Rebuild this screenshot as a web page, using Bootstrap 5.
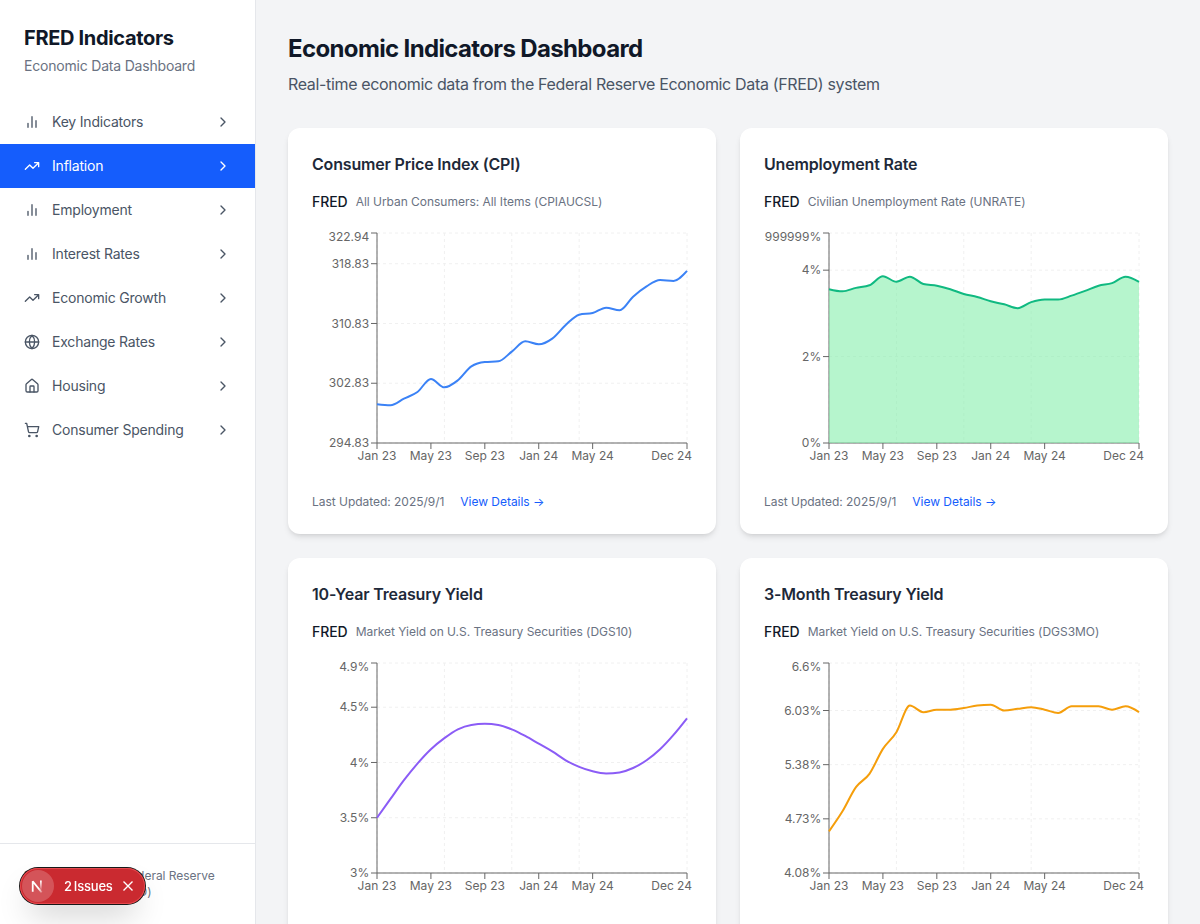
<!DOCTYPE html>
<html lang="en">
<head>
<meta charset="utf-8">
<meta name="viewport" content="width=device-width, initial-scale=1">
<title>FRED Indicators</title>
<link href="https://cdn.jsdelivr.net/npm/bootstrap@5.3.0/dist/css/bootstrap.min.css" rel="stylesheet">
<style>
  body { font-family: Inter, "Liberation Sans", sans-serif; background: #f3f4f6; color: #101828; line-height: 1.5; }
  .sidebar { width: 256px; border-right: 1px solid #e5e7eb; }
  .brand { font-size: 20px; line-height: 28px; letter-spacing: -.33px; }
  .fs-sm { font-size: 14px; line-height: 20px; letter-spacing: -.2px; }
  .fs-xs { font-size: 12px; line-height: 16px; letter-spacing: -.03px; }
  .muted { color: #6a7282; }
  .side-link { gap: 12px; padding: 12px 24px; color: #4a5565; border-radius: 0; font-size: 14px; line-height: 20px; letter-spacing: -.2px; }
  .side-link:hover { color: #101828; }
  .side-link.active { background: #155dfc; color: #fff; }
  .side-foot { border-top: 1px solid #e5e7eb; }
  .icon { width: 16px; height: 16px; fill: none; stroke: currentColor; stroke-width: 2; stroke-linecap: round; stroke-linejoin: round; flex: none; }
  main { padding: 32px; min-width: 0; }
  .page-title { font-size: 24px; line-height: 32px; padding-top: 1px; margin-bottom: 7px; letter-spacing: -.64px; }
  .page-sub { font-size: 16px; line-height: 24px; color: #4a5565; margin-bottom: 32px; letter-spacing: -.34px; }
  .panel { border: 0; border-radius: 12px; padding: 24px; box-shadow: 0 4px 6px -1px rgba(0,0,0,.1), 0 2px 4px -2px rgba(0,0,0,.1); }
  .panel h2 { font-size: 16px; line-height: 24px; color: #1e2939; letter-spacing: -.18px; }
  .panel a { color: #155dfc; }
  .source { font-size: 14px; line-height: 20px; font-weight: 500; letter-spacing: -.06px; }
  .chart { display: block; width: 380px; height: 250px; font-size: 12px; overflow: visible; }
  .issues { left: 20px; bottom: 20px; width: 125px; height: 36px; border-radius: 18px; background: #ca2a30; color: #fff; padding: 2px;
    box-shadow: 0 0 0 1px #171717, inset 0 0 0 1px #e5484d, 0 16px 32px -8px rgba(0,0,0,.24); font-size: 13px; line-height: 16px; }
  .issues-logo { width: 32px; height: 32px; background: rgba(255,255,255,.2); }
  .issues-text { gap: 2px; margin: -1px 9px 0 10px; font-weight: 500; letter-spacing: -.2px; }
</style>
</head>
<body class="overflow-hidden">
<svg class="d-none">
  <symbol id="bars" viewBox="0 0 24 24"><path d="M18 20V10M12 20V4M6 20v-6"/></symbol>
  <symbol id="trend" viewBox="0 0 24 24"><path d="M22 7 13.5 15.5 8.5 10.5 2 17M16 7h6v6"/></symbol>
  <symbol id="globe" viewBox="0 0 24 24"><circle cx="12" cy="12" r="10"/><path d="M12 2a14.5 14.5 0 0 0 0 20 14.5 14.5 0 0 0 0-20M2 12h20"/></symbol>
  <symbol id="house" viewBox="0 0 24 24"><path d="M15 21v-8a1 1 0 0 0-1-1h-4a1 1 0 0 0-1 1v8"/><path d="M3 10a2 2 0 0 1 .709-1.528l7-5.999a2 2 0 0 1 2.582 0l7 5.999A2 2 0 0 1 21 10v9a2 2 0 0 1-2 2H5a2 2 0 0 1-2-2z"/></symbol>
  <symbol id="cart" viewBox="0 0 24 24"><circle cx="8" cy="21" r="1"/><circle cx="19" cy="21" r="1"/><path d="M2.05 2.05h2l2.66 12.42a2 2 0 0 0 2 1.58h9.78a2 2 0 0 0 1.95-1.57l1.65-7.43H5.12"/></symbol>
  <symbol id="chev" viewBox="0 0 24 24"><path d="m9 18 6-6-6-6"/></symbol>
</svg>

<div class="d-flex vh-100">
  <aside class="sidebar bg-white d-flex flex-column flex-shrink-0">
    <div class="p-4">
      <h1 class="brand fw-bold mb-1">FRED Indicators</h1>
      <p class="fs-sm muted mb-0">Economic Data Dashboard</p>
    </div>
    <nav class="nav flex-column flex-nowrap flex-grow-1">
      <a class="nav-link side-link d-flex align-items-center" href="#"><svg class="icon"><use href="#bars"/></svg><span class="flex-grow-1">Key Indicators</span><svg class="icon"><use href="#chev"/></svg></a>
      <a class="nav-link side-link d-flex align-items-center active" href="#"><svg class="icon"><use href="#trend"/></svg><span class="flex-grow-1">Inflation</span><svg class="icon"><use href="#chev"/></svg></a>
      <a class="nav-link side-link d-flex align-items-center" href="#"><svg class="icon"><use href="#bars"/></svg><span class="flex-grow-1">Employment</span><svg class="icon"><use href="#chev"/></svg></a>
      <a class="nav-link side-link d-flex align-items-center" href="#"><svg class="icon"><use href="#bars"/></svg><span class="flex-grow-1">Interest Rates</span><svg class="icon"><use href="#chev"/></svg></a>
      <a class="nav-link side-link d-flex align-items-center" href="#"><svg class="icon"><use href="#trend"/></svg><span class="flex-grow-1">Economic Growth</span><svg class="icon"><use href="#chev"/></svg></a>
      <a class="nav-link side-link d-flex align-items-center" href="#"><svg class="icon"><use href="#globe"/></svg><span class="flex-grow-1">Exchange Rates</span><svg class="icon"><use href="#chev"/></svg></a>
      <a class="nav-link side-link d-flex align-items-center" href="#"><svg class="icon"><use href="#house"/></svg><span class="flex-grow-1">Housing</span><svg class="icon"><use href="#chev"/></svg></a>
      <a class="nav-link side-link d-flex align-items-center" href="#"><svg class="icon"><use href="#cart"/></svg><span class="flex-grow-1">Consumer Spending</span><svg class="icon"><use href="#chev"/></svg></a>
    </nav>
    <div class="side-foot p-4 fs-xs muted">Data provided by Federal Reserve Economic Data (FRED)</div>
  </aside>

  <main class="flex-grow-1 overflow-hidden">
    <h1 class="page-title fw-bold">Economic Indicators Dashboard</h1>
    <p class="page-sub">Real-time economic data from the Federal Reserve Economic Data (FRED) system</p>
    <div class="row row-cols-2 g-4">
      <div class="col"><section class="card panel">
        <h2 class="fw-semibold mb-3">Consumer Price Index (CPI)</h2>
        <div class="d-flex align-items-center gap-2 mb-3"><span class="source">FRED</span><span class="fs-xs muted">All Urban Consumers: All Items (CPIAUCSL)</span></div>
        <svg class="chart" data-chart="cpi"></svg>
        <div class="d-flex gap-3 mt-3 fs-xs muted"><span>Last Updated: 2025/9/1</span><a class="text-decoration-none" href="#">View Details →</a></div>
      </section></div>
      <div class="col"><section class="card panel">
        <h2 class="fw-semibold mb-3">Unemployment Rate</h2>
        <div class="d-flex align-items-center gap-2 mb-3"><span class="source">FRED</span><span class="fs-xs muted">Civilian Unemployment Rate (UNRATE)</span></div>
        <svg class="chart" data-chart="unrate"></svg>
        <div class="d-flex gap-3 mt-3 fs-xs muted"><span>Last Updated: 2025/9/1</span><a class="text-decoration-none" href="#">View Details →</a></div>
      </section></div>
      <div class="col"><section class="card panel">
        <h2 class="fw-semibold mb-3">10-Year Treasury Yield</h2>
        <div class="d-flex align-items-center gap-2 mb-3"><span class="source">FRED</span><span class="fs-xs muted">Market Yield on U.S. Treasury Securities (DGS10)</span></div>
        <svg class="chart" data-chart="dgs10"></svg>
        <div class="d-flex gap-3 mt-3 fs-xs muted"><span>Last Updated: 2025/9/1</span><a class="text-decoration-none" href="#">View Details →</a></div>
      </section></div>
      <div class="col"><section class="card panel">
        <h2 class="fw-semibold mb-3">3-Month Treasury Yield</h2>
        <div class="d-flex align-items-center gap-2 mb-3"><span class="source">FRED</span><span class="fs-xs muted">Market Yield on U.S. Treasury Securities (DGS3MO)</span></div>
        <svg class="chart" data-chart="dgs3mo"></svg>
        <div class="d-flex gap-3 mt-3 fs-xs muted"><span>Last Updated: 2025/9/1</span><a class="text-decoration-none" href="#">View Details →</a></div>
      </section></div>
    </div>
  </main>
</div>

<div class="issues position-fixed d-flex align-items-center">
  <span class="issues-logo rounded-circle flex-shrink-0">
    <svg class="d-block" width="32" height="32" viewBox="0 0 40 40" fill="none">
      <defs>
        <linearGradient id="ng1" x1="9.95" y1="11.12" x2="15.2" y2="17.6" gradientUnits="userSpaceOnUse"><stop stop-color="#fff"/><stop offset="1" stop-color="#fff" stop-opacity="0"/></linearGradient>
        <linearGradient id="ng2" x1="12.4" y1="1.4" x2="12.4" y2="13.6" gradientUnits="userSpaceOnUse"><stop stop-color="#fff"/><stop offset="1" stop-color="#fff" stop-opacity="0"/></linearGradient>
      </defs>
      <g transform="translate(11 12.2)" stroke-width="2.2">
        <path d="M2.4 15V1.8l11.2 14" stroke="url(#ng1)" stroke-linejoin="bevel"/>
        <path d="M12.6 .8v12.3" stroke="url(#ng2)"/>
      </g>
    </svg>
  </span>
  <span class="issues-text d-flex"><span>2</span><span>Issues</span></span>
  <svg class="flex-shrink-0" width="12" height="12" viewBox="0 0 12 12" fill="none" stroke="#fff" stroke-width="1.4"><path d="M1.5 1.5l9 9M10.5 1.5l-9 9"/></svg>
</div>

<script src="https://cdn.jsdelivr.net/npm/bootstrap@5.3.0/dist/js/bootstrap.bundle.min.js"></script>
<script>
const CHARTS = {
  cpi: { min: 294.83, max: 322.94, color: '#3b82f6',
    ticks: [[294.83,'294.83'],[302.83,'302.83'],[310.83,'310.83'],[318.83,'318.83'],[322.94,'322.94']],
    data: [300.01,299.87,300.76,301.66,303.4,302.28,303.22,305.09,305.67,305.76,307.06,308.44,308.04,308.8,310.63,312.01,312.23,312.95,312.59,314.42,315.8,316.65,316.52,317.86] },
  unrate: { min: 0, max: 4.86, color: '#10b981', fill: '#86efac',
    ticks: [[0,'0%'],[2,'2%'],[4,'4%'],[4.86,'999999%']],
    data: [3.56,3.51,3.59,3.65,3.86,3.73,3.85,3.68,3.64,3.56,3.45,3.38,3.28,3.21,3.12,3.26,3.32,3.32,3.41,3.52,3.64,3.7,3.85,3.73] },
  dgs10: { min: 3, max: 4.9, color: '#8b5cf6',
    ticks: [[3,'3%'],[3.5,'3.5%'],[4,'4%'],[4.5,'4.5%'],[4.9,'4.9%']],
    data: [3.5,3.67,3.84,3.99,4.12,4.22,4.3,4.34,4.35,4.34,4.3,4.24,4.17,4.1,4.02,3.96,3.92,3.9,3.91,3.95,4.02,4.12,4.25,4.4] },
  dgs3mo: { min: 4.08, max: 6.6, color: '#f59e0b',
    ticks: [[4.08,'4.08%'],[4.73,'4.73%'],[5.38,'5.38%'],[6.03,'6.03%'],[6.6,'6.6%']],
    data: [4.58,4.82,5.11,5.27,5.57,5.77,6.09,6.01,6.04,6.04,6.06,6.09,6.1,6.03,6.05,6.07,6.04,6,6.08,6.08,6.08,6.04,6.08,6.01] }
};
const L = 65, R = 375, T = 5, B = 215;
const px = i => L + (R - L) * i / 23;

// Monotone cubic interpolation through the monthly points
function curve(p) {
  const n = p.length, s = [], m = [];
  for (let i = 0; i < n - 1; i++) s.push((p[i+1][1] - p[i][1]) / (p[i+1][0] - p[i][0]));
  for (let i = 1; i < n - 1; i++) {
    const a = s[i-1], b = s[i];
    m[i] = (Math.sign(a) + Math.sign(b)) * Math.min(Math.abs(a), Math.abs(b), Math.abs(a + b) / 4) || 0;
  }
  m[0] = (3 * s[0] - m[1]) / 2;
  m[n-1] = (3 * s[n-2] - m[n-2]) / 2;
  let d = `M${p[0]}`;
  for (let i = 0; i < n - 1; i++) {
    const h = (p[i+1][0] - p[i][0]) / 3;
    d += `C${p[i][0]+h},${p[i][1]+h*m[i]},${p[i+1][0]-h},${p[i+1][1]-h*m[i+1]},${p[i+1]}`;
  }
  return d;
}

document.querySelectorAll('[data-chart]').forEach(svg => {
  const c = CHARTS[svg.dataset.chart];
  const py = v => B - (B - T) * (v - c.min) / (c.max - c.min);
  const d = curve(c.data.map((v, i) => [px(i), py(v)]));
  let h = '<g stroke="#f0f0f0" stroke-dasharray="3 3">';
  c.ticks.forEach(t => h += `<line x1="${L}" x2="${R}" y1="${py(t[0])}" y2="${py(t[0])}"/>`);
  [0, 5, 10, 15, 23].forEach(i => h += `<line x1="${px(i)}" x2="${px(i)}" y1="${T}" y2="${B}"/>`);
  h += '</g>';
  h += `<g stroke="#666"><path d="M${L} ${B}H${R}M${L} ${T}V${B}"/>` +
    c.ticks.map(t => `<path d="M${L-6} ${py(t[0])}h6"/>`).join('') +
    [0, 4, 8, 12, 16, 23].map(i => `<path d="M${px(i)} ${B}v6"/>`).join('') + '</g>';
  if (c.fill) h += `<path d="${d}V${B}H${L}Z" fill="${c.fill}" fill-opacity=".6"/>`;
  h += `<path d="${d}" fill="none" stroke="${c.color}" stroke-width="2"/><g fill="#666">`;
  c.ticks.forEach(t => h += `<text x="${L-7.8}" y="${Math.max(py(t[0]), 9) + 4.26}" text-anchor="end">${t[1]}</text>`);
  [[0,'Jan 23'],[4,'May 23'],[8,'Sep 23'],[12,'Jan 24'],[16,'May 24']].forEach(t =>
    h += `<text x="${px(t[0])}" y="${B + 16.52}" text-anchor="middle">${t[1]}</text>`);
  h += `<text x="380" y="${B + 16.52}" text-anchor="end">Dec 24</text></g>`;
  svg.innerHTML = h;
});
</script>
</body>
</html>
